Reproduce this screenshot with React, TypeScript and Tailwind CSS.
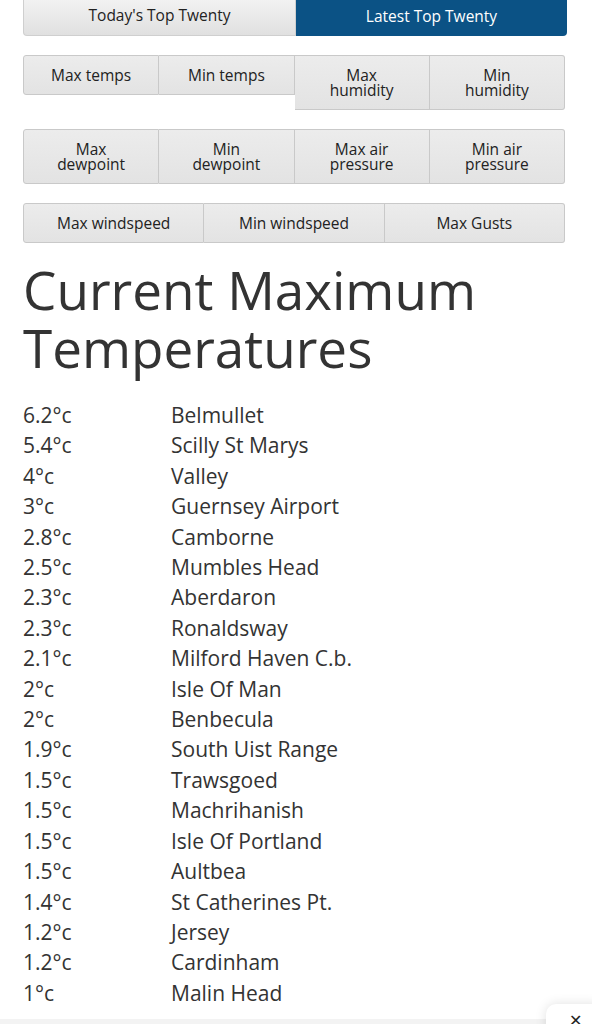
const rows = [
  ["6.2°c", "Belmullet"],
  ["5.4°c", "Scilly St Marys"],
  ["4°c", "Valley"],
  ["3°c", "Guernsey Airport"],
  ["2.8°c", "Camborne"],
  ["2.5°c", "Mumbles Head"],
  ["2.3°c", "Aberdaron"],
  ["2.3°c", "Ronaldsway"],
  ["2.1°c", "Milford Haven C.b."],
  ["2°c", "Isle Of Man"],
  ["2°c", "Benbecula"],
  ["1.9°c", "South Uist Range"],
  ["1.5°c", "Trawsgoed"],
  ["1.5°c", "Machrihanish"],
  ["1.5°c", "Isle Of Portland"],
  ["1.5°c", "Aultbea"],
  ["1.4°c", "St Catherines Pt."],
  ["1.2°c", "Jersey"],
  ["1.2°c", "Cardinham"],
  ["1°c", "Malin Head"],
];

const btn =
  "flex-1 border border-[#c9c9c9] bg-gradient-to-b from-[#ececec] to-[#e3e3e3] px-2 py-[11.5px] text-center text-[15.5px] leading-[15px] text-[#222]";

function BtnRow({ items }: { items: string[][] }) {
  return (
    <div className="flex items-start">
      {items.map((lines, i) => (
        <button
          key={i}
          className={
            btn +
            (i == 0 ? " rounded-l-[3px]" : " border-l-0") +
            (i == items.length - 1 ? " rounded-r-[3px]" : "")
          }
        >
          {lines.map((l, j) => (
            <div key={j}>{l}</div>
          ))}
        </button>
      ))}
    </div>
  );
}

export default function App() {
  return (
    <div className="relative min-h-[1024px] overflow-hidden bg-white font-['Open_Sans',sans-serif] text-[#333]">
      <div className="pl-[23px] pr-[25px]">
        {/* tabs */}
        <div className="flex h-[36px] text-[15.5px]">
          <div className="flex flex-1 items-center justify-center rounded-bl-[4px] border border-t-0 border-[#cfcfcf] bg-gradient-to-b from-[#f2f2f2] to-[#e0e0e0] pb-[3px] text-[#222]">
            Today's Top Twenty
          </div>
          <div className="flex flex-1 items-center justify-center rounded-br-[4px] bg-[#0b5285] pb-[3px] text-white">
            Latest Top Twenty
          </div>
        </div>

        <div className="mt-[19px] flex flex-col gap-[19px] pr-[2px]">
          <BtnRow items={[["Max temps"], ["Min temps"], ["Max", "humidity"], ["Min", "humidity"]]} />
          <BtnRow
            items={[
              ["Max", "dewpoint"],
              ["Min", "dewpoint"],
              ["Max air", "pressure"],
              ["Min air", "pressure"],
            ]}
          />
          <BtnRow items={[["Max windspeed"], ["Min windspeed"], ["Max Gusts"]]} />
        </div>

        <h1 className="mt-[18px] text-[53px] leading-[58px] font-normal text-[#333]">
          Current Maximum Temperatures
        </h1>

        <div className="mt-[23px] text-[21px] leading-[30.4px] text-[#333]">
          {rows.map(([t, n], i) => (
            <div key={i} className="flex">
              <div className="w-[148px]">{t}</div>
              <div>{n}</div>
            </div>
          ))}
        </div>
      </div>

      {/* bottom bar + widget */}
      <div className="absolute bottom-0 left-0 right-0 h-[5px] bg-[#f3f3f3]" />
      <div className="absolute bottom-[-20px] right-[-12px] flex h-[40px] w-[58px] items-start justify-center rounded-[10px] bg-white pt-[8px] shadow-[0_0_12px_rgba(0,0,0,0.12)]">
        <span className="text-[16px] leading-none text-[#222]">✕</span>
      </div>
    </div>
  );
}
